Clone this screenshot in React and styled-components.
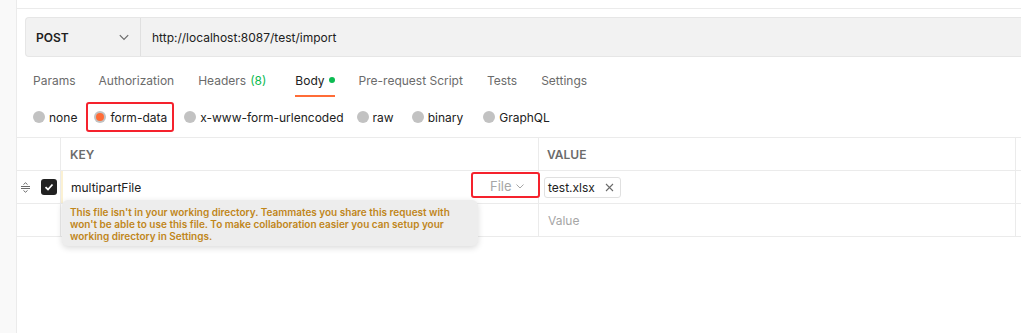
import React from 'react';
import styled, { createGlobalStyle } from 'styled-components';

const GlobalStyle = createGlobalStyle`
  body {
    margin: 0;
    background: #fff;
    font-family: Inter, 'Noto Sans', sans-serif;
    color: #212121;
  }
`;

const Page = styled.div`
  display: flex;
  height: 333px;
  overflow: hidden;
`;

const Sidebar = styled.div`
  width: 16px;
  flex: none;
  background: #f9f9f9;
  border-right: 1px solid #ebebeb;
`;

const Main = styled.div`
  flex: 1;
  display: flex;
  flex-direction: column;
  min-width: 0;
`;

const TopStrip = styled.div`
  height: 8px;
  border-bottom: 1px solid #ebebeb;
`;

const RequestBar = styled.div`
  display: flex;
  height: 38px;
  margin: 8px 0 0 8px;
  background: #f2f2f2;
  border: 1px solid #e6e6e6;
  border-right: none;
  border-radius: 4px 0 0 4px;
`;

const Method = styled.div`
  box-sizing: border-box;
  width: 115px;
  padding: 0 10px 0 10px;
  display: flex;
  align-items: center;
  justify-content: space-between;
  border-right: 1px solid #e0e0e0;
  font-size: 12px;
  font-weight: 600;
  color: #212121;
`;

const Url = styled.div`
  display: flex;
  align-items: center;
  padding-left: 11px;
  font-size: 12px;
  color: #212121;
`;

const Tabs = styled.div`
  display: flex;
  height: 40px;
  padding-left: 16px;
  align-items: stretch;
`;

const Tab = styled.div`
  display: flex;
  align-items: center;
  margin-right: ${p => p.gap}px;
  font-size: 12px;
  color: ${p => (p.active ? '#212121' : '#6b6b6b')};
  border-bottom: 2px solid ${p => (p.active ? '#ff6c37' : 'transparent')};
  box-sizing: border-box;
  padding-top: 8px;
`;

const Count = styled.span`
  color: #0cbb52;
  margin-left: 4px;
`;

const Dot = styled.span`
  width: 6px;
  height: 6px;
  border-radius: 50%;
  background: #0cbb52;
  margin-left: 4px;
`;

const Radios = styled.div`
  display: flex;
  align-items: center;
  height: 40px;
  padding-left: 16px;
`;

const RadioItem = styled.div`
  display: flex;
  align-items: center;
  box-sizing: border-box;
  height: 30px;
  margin-right: ${p => p.gap}px;
  padding: 0 ${p => (p.marked ? 5 : 0)}px 0 ${p => (p.marked ? 6 : 0)}px;
  border: ${p => (p.marked ? '2px solid #f5222d' : 'none')};
  border-radius: 3px;
  font-size: 12px;
  color: #212121;
`;

const Circle = styled.span`
  width: 12px;
  height: 12px;
  border-radius: 50%;
  background: #c2c2c2;
  margin-right: 4px;
  display: flex;
  align-items: center;
  justify-content: center;
  &::after {
    content: '';
    display: ${p => (p.checked ? 'block' : 'none')};
    width: 8px;
    height: 8px;
    border-radius: 50%;
    background: #ff6c37;
  }
`;

const Table = styled.div`
  position: relative;
  border-top: 1px solid #ebebeb;
`;

const Row = styled.div`
  display: grid;
  grid-template-columns: 44px 478px 477px 1fr;
  height: 32px;
  border-bottom: 1px solid #ebebeb;
`;

const Cell = styled.div`
  display: flex;
  align-items: center;
  border-right: 1px solid #ebebeb;
  padding-left: ${p => p.pad || 0}px;
  font-size: 12px;
  min-width: 0;
  &:last-child {
    border-right: none;
  }
`;

const HeadCell = styled(Cell)`
  font-size: 12px;
  font-weight: 600;
  color: #6b6b6b;
`;

const Handle = styled.div`
  display: flex;
  align-items: center;
  gap: 10px;
  padding-left: 3px;
`;

const Check = styled.span`
  width: 16px;
  height: 16px;
  border-radius: 3px;
  background: #212121;
  display: flex;
  align-items: center;
  justify-content: center;
`;

const KeyCell = styled(Cell)`
  justify-content: space-between;
  box-shadow: inset 2px 0 0 #fbf1d3;
`;

const FileSelect = styled.div`
  display: flex;
  align-items: center;
  align-self: flex-start;
  box-sizing: border-box;
  height: 26px;
  width: 69px;
  margin: 1px -2px 0 0;
  padding: 2px 0 0 17px;
  border: 2px solid #f5222d;
  border-radius: 3px;
  font-size: 13px;
  color: #a6a6a6;
  gap: 3px;
  position: relative;
  z-index: 1;
`;

const Chip = styled.div`
  display: flex;
  align-items: center;
  gap: 10px;
  height: 19px;
  padding: 0 6px 0 3px;
  margin-left: 5px;
  border: 1px solid #e0e0e0;
  border-radius: 3px;
  font-size: 12px;
  color: #212121;
`;

const Placeholder = styled.span`
  color: #a6a6a6;
`;

const Tooltip = styled.div`
  position: absolute;
  left: 45px;
  top: 62px;
  width: 400px;
  padding: 6px 8px 4px 8px;
  background: #ededed;
  border-radius: 6px;
  box-shadow: 0 2px 6px rgba(0, 0, 0, 0.15);
  font-size: 10px;
  font-weight: 600;
  line-height: 12px;
  color: #c0861a;
  z-index: 2;
`;

const Chevron = ({ size = 10, color = '#6b6b6b' }) => (
  <svg width={size} height={size} viewBox='0 0 10 10' fill='none'>
    <path d='M1.5 3.5 L5 7 L8.5 3.5' stroke={color} strokeWidth='1' />
  </svg>
);

const tabs = [
  { label: 'Params', gap: 23 },
  { label: 'Authorization', gap: 24 },
  { label: 'Headers', count: '(8)', gap: 29 },
  { label: 'Body', active: true, dot: true, gap: 24 },
  { label: 'Pre-request Script', gap: 24 },
  { label: 'Tests', gap: 24 },
  { label: 'Settings', gap: 0 },
];

const radios = [
  { label: 'none', gap: 9 },
  { label: 'form-data', checked: true, marked: true, gap: 10 },
  { label: 'x-www-form-urlencoded', gap: 13 },
  { label: 'raw', gap: 18 },
  { label: 'binary', gap: 20 },
  { label: 'GraphQL', gap: 0 },
];

const App = () => {
  return (
    <Page>
      <GlobalStyle />
      <Sidebar />
      <Main>
        <TopStrip />
        <RequestBar>
          <Method>
            POST
            <Chevron size={12} />
          </Method>
          <Url>http://localhost:8087/test/import</Url>
        </RequestBar>
        <Tabs>
          {tabs.map(t => (
            <Tab key={t.label} active={t.active} gap={t.gap}>
              {t.label}
              {t.count && <Count>{t.count}</Count>}
              {t.dot && <Dot />}
            </Tab>
          ))}
        </Tabs>
        <Radios>
          {radios.map(r => (
            <RadioItem key={r.label} marked={r.marked} gap={r.gap}>
              <Circle checked={r.checked} />
              {r.label}
            </RadioItem>
          ))}
        </Radios>
        <Table>
          <Row>
            <Cell />
            <HeadCell pad={9}>KEY</HeadCell>
            <HeadCell pad={8}>VALUE</HeadCell>
            <Cell />
          </Row>
          <Row>
            <Cell>
              <Handle>
                <svg width='11' height='11' viewBox='0 0 11 11' fill='none'>
                  <path d='M1 4.5 H10 M1 6.5 H10' stroke='#6b6b6b' strokeWidth='1' />
                  <path d='M3.5 2.5 L5.5 0.8 L7.5 2.5 M3.5 8.5 L5.5 10.2 L7.5 8.5' stroke='#6b6b6b' strokeWidth='1' />
                </svg>
                <Check>
                  <svg width='10' height='10' viewBox='0 0 10 10' fill='none'>
                    <path d='M1.5 5.2 L4 7.5 L8.5 2.5' stroke='#fff' strokeWidth='1.8' />
                  </svg>
                </Check>
              </Handle>
            </Cell>
            <KeyCell pad={10}>
              multipartFile
              <FileSelect>
                File
                <Chevron size={10} color='#a6a6a6' />
              </FileSelect>
            </KeyCell>
            <Cell>
              <Chip>
                test.xlsx
                <svg width='9' height='9' viewBox='0 0 9 9' fill='none'>
                  <path d='M1 1 L8 8 M8 1 L1 8' stroke='#6b6b6b' strokeWidth='1.1' />
                </svg>
              </Chip>
            </Cell>
            <Cell />
          </Row>
          <Row>
            <Cell />
            <Cell />
            <Cell pad={9}>
              <Placeholder>Value</Placeholder>
            </Cell>
            <Cell />
          </Row>
          <Tooltip>
            This file isn't in your working directory. Teammates you share this request with
            won't be able to use this file. To make collaboration easier you can setup your
            working directory in Settings.
          </Tooltip>
        </Table>
      </Main>
    </Page>
  );
};

export default App;
